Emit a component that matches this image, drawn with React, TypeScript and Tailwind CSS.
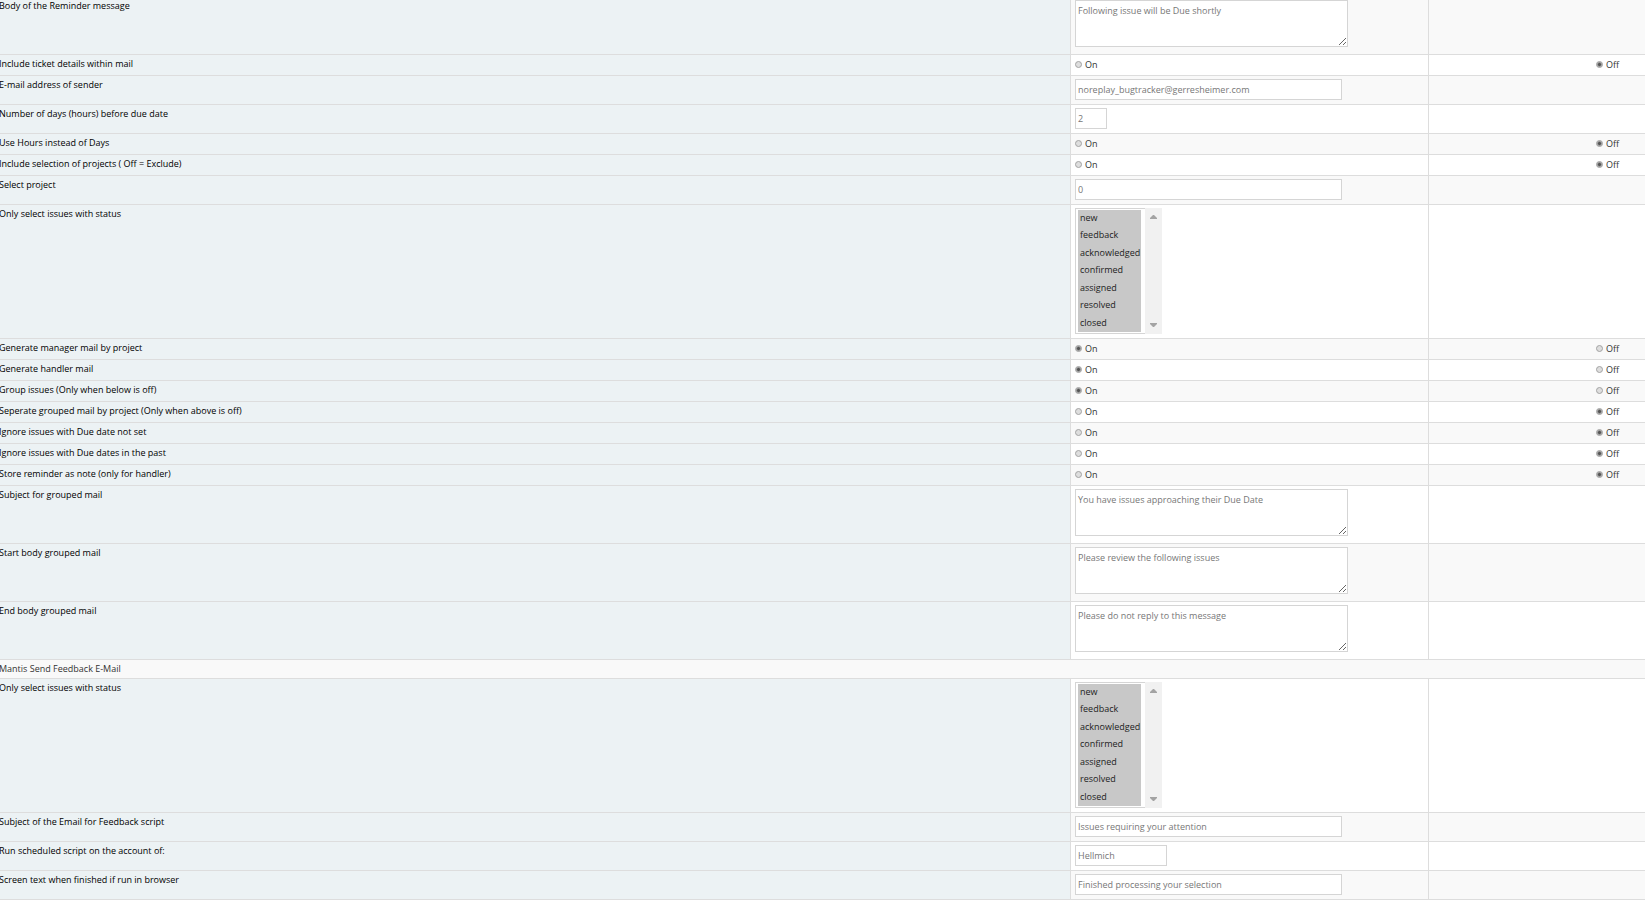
import React, { useState } from 'react';
import clsx from 'clsx';

type Row =
    | { type: 'heading'; id: string; label: string }
    | { type: 'toggle'; id: string; label: string; value: boolean }
    | { type: 'text'; id: string; label: string; value: string; width: string }
    | { type: 'area'; id: string; label: string; value: string }
    | { type: 'status'; id: string; label: string };

const statuses = ['new', 'feedback', 'acknowledged', 'confirmed', 'assigned', 'resolved', 'closed'];

const rows: Row[] = [
    { type: 'area', id: 'reminder_body', label: 'Body of the Reminder message', value: 'Following issue will be Due shortly' },
    { type: 'toggle', id: 'reminder_details', label: 'Include ticket details within mail', value: false },
    { type: 'text', id: 'reminder_sender', label: 'E-mail address of sender', value: 'noreplay_bugtracker@gerresheimer.com', width: 'w-[267px]' },
    { type: 'text', id: 'reminder_days', label: 'Number of days (hours) before due date', value: '2', width: 'w-[32px]' },
    { type: 'toggle', id: 'reminder_hours', label: 'Use Hours instead of Days', value: false },
    { type: 'toggle', id: 'reminder_include', label: 'Include selection of projects ( Off = Exclude)', value: false },
    { type: 'text', id: 'reminder_project', label: 'Select project', value: '0', width: 'w-[267px]' },
    { type: 'status', id: 'reminder_status', label: 'Only select issues with status' },
    { type: 'toggle', id: 'reminder_manager', label: 'Generate manager mail by project', value: true },
    { type: 'toggle', id: 'reminder_handler', label: 'Generate handler mail', value: true },
    { type: 'toggle', id: 'reminder_group', label: 'Group issues (Only when below is off)', value: true },
    { type: 'toggle', id: 'reminder_seperate', label: 'Seperate grouped mail by project (Only when above is off)', value: false },
    { type: 'toggle', id: 'reminder_unset', label: 'Ignore issues with Due date not set', value: false },
    { type: 'toggle', id: 'reminder_past', label: 'Ignore issues with Due dates in the past', value: false },
    { type: 'toggle', id: 'reminder_note', label: 'Store reminder as note (only for handler)', value: false },
    { type: 'area', id: 'group_subject', label: 'Subject for grouped mail', value: 'You have issues approaching their Due Date' },
    { type: 'area', id: 'group_start', label: 'Start body grouped mail', value: 'Please review the following issues' },
    { type: 'area', id: 'group_end', label: 'End body grouped mail', value: 'Please do not reply to this message' },
    { type: 'heading', id: 'feedback', label: 'Mantis Send Feedback E-Mail' },
    { type: 'status', id: 'feedback_status', label: 'Only select issues with status' },
    { type: 'text', id: 'feedback_subject', label: 'Subject of the Email for Feedback script', value: 'Issues requiring your attention', width: 'w-[267px]' },
    { type: 'text', id: 'feedback_account', label: 'Run scheduled script on the account of:', value: 'Hellmich', width: 'w-[92px]' },
    { type: 'text', id: 'feedback_finished', label: 'Screen text when finished if run in browser', value: 'Finished processing your selection', width: 'w-[267px]' },
];

const Radio: React.FC<{ name: string; text: string; checked: boolean; onChange: () => void }> = ({ name, text, checked, onChange }) => (
    <label className="flex w-fit items-center gap-[3px] text-[#333]">
        <input
            type="radio"
            name={name}
            checked={checked}
            onChange={onChange}
            className="mb-px size-[7px] appearance-none rounded-full border border-[#a3a3a3] bg-[#dedede] checked:bg-[radial-gradient(circle,#555_1px,#d8d8d8_3px)]"
        />
        {text}
    </label>
);

// Multi select with the scroll track drawn over its right edge
const StatusSelect: React.FC<{ id: string }> = ({ id }) => {
    const [selected, setSelected] = useState(statuses);

    return (
        <div className="relative h-[126px] w-[87px]">
            <select
                id={id}
                multiple
                size={7}
                value={selected}
                onChange={(e) => setSelected(Array.from(e.target.selectedOptions, (o) => o.value))}
                className="block h-full w-full overflow-hidden border border-[#d5d5d5] bg-white py-px pr-[20px] pl-[2px] outline-none"
            >
                {statuses.map((status) => (
                    <option
                        key={status}
                        value={status}
                        className="box-border h-[17px] min-h-0 p-0 pt-px pl-[2px] text-[#222] checked:bg-[#c8c8c8] checked:bg-[linear-gradient(#c8c8c8,#c8c8c8)] even:h-[18px]"
                    >
                        {status}
                    </option>
                ))}
            </select>
            <div className="pointer-events-none absolute inset-y-0 right-0 flex w-[17px] flex-col items-center justify-between bg-[#f1f1f1] py-[7px]">
                <svg width="7" height="4" viewBox="0 0 7 4" fill="#a3a3a3"><path d="M3 0h1l3 3v1H0V3z" /></svg>
                <svg width="7" height="4" viewBox="0 0 7 4" fill="#a3a3a3"><path d="M0 0h7v1L4 4H3L0 1z" /></svg>
            </div>
        </div>
    );
};

const SettingsRow: React.FC<{ row: Row }> = ({ row }) => {
    const [on, setOn] = useState(row.type === 'toggle' && row.value);

    if (row.type === 'heading') {
        return (
            <tr className="odd:bg-[#f9f9f9]">
                <td colSpan={3} className="h-[19px] border-b border-[#ddd] p-0 text-[#333]">{row.label}</td>
            </tr>
        );
    }

    const cell = 'border-b border-[#ddd] align-top';
    const control = {
        toggle: 'h-[21px] pt-[2px]',
        text: 'pt-[3px] pb-1',
        area: 'pt-[3px] pb-[7px]',
        status: 'pt-[3px] pb-1',
    }[row.type];

    return (
        <tr className="bg-white odd:bg-[#f9f9f9]">
            <th scope="row" className={clsx(cell, 'border-r bg-[#ecf2f4] pt-px text-left font-normal text-black')}>
                {row.type === 'toggle' ? row.label : <label htmlFor={row.id}>{row.label}</label>}
            </th>
            <td className={clsx(cell, 'border-r pl-1', control)}>
                {row.type === 'toggle' && <Radio name={row.id} text="On" checked={on} onChange={() => setOn(true)} />}
                {row.type === 'text' && (
                    <input
                        id={row.id}
                        type="text"
                        defaultValue={row.value}
                        className={clsx('block h-[21px] border border-[#d5d5d5] bg-white px-[2px] text-[#777] outline-none', row.width)}
                    />
                )}
                {row.type === 'area' && (
                    <textarea
                        id={row.id}
                        defaultValue={row.value}
                        className="block h-[47px] w-[273px] resize border border-[#d5d5d5] bg-white px-[2px] py-[2px] text-[#777] outline-none"
                    />
                )}
                {row.type === 'status' && <StatusSelect id={row.id} />}
            </td>
            <td className={clsx(cell, row.type === 'toggle' && 'pt-[2px] pl-[167px]')}>
                {row.type === 'toggle' && <Radio name={row.id} text="Off" checked={!on} onChange={() => setOn(false)} />}
            </td>
        </tr>
    );
};

const App: React.FC = () => {
    return (
        <form className="min-h-screen overflow-hidden bg-white font-['Open_Sans',sans-serif] text-[9px] leading-4">
            <table className="-mt-[3px] -ml-px w-[calc(100%+1px)] table-fixed border-separate border-spacing-0">
                <colgroup>
                    <col />
                    <col className="w-[358px]" />
                    <col className="w-[216px]" />
                </colgroup>
                <tbody>
                    {rows.map((row) => (
                        <SettingsRow key={row.id} row={row} />
                    ))}
                </tbody>
            </table>
        </form>
    );
};

export default App;
